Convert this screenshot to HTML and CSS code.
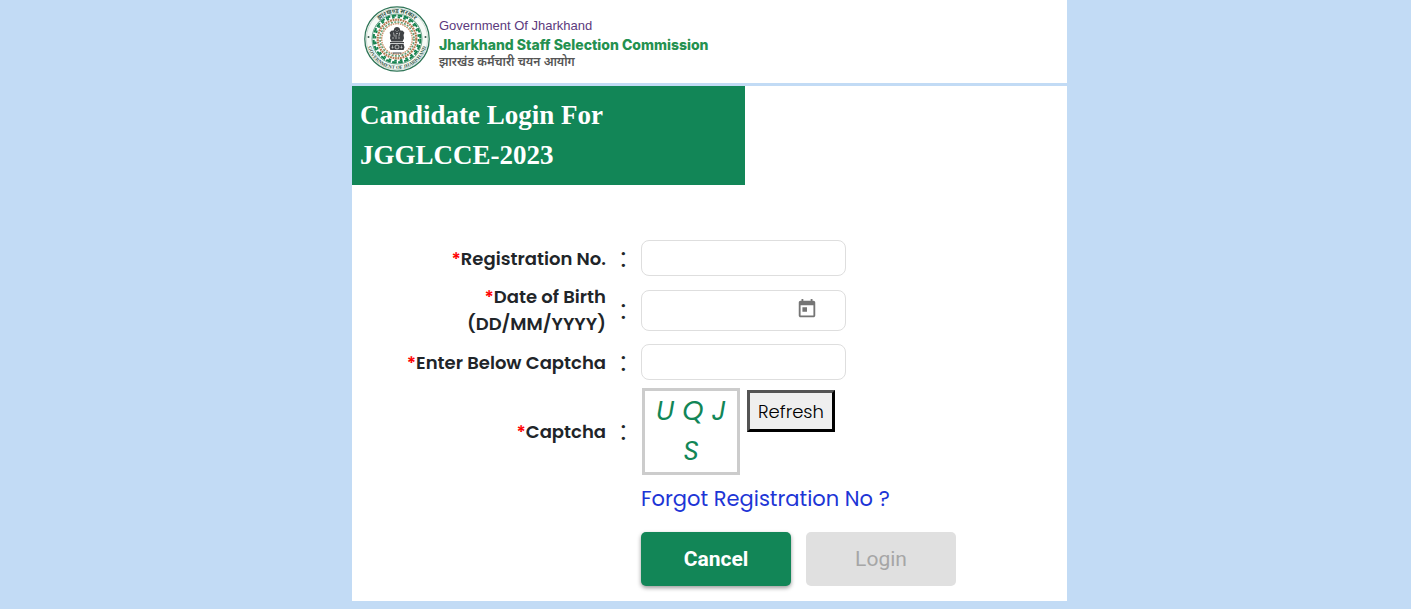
FILE: index.html
```html
<!DOCTYPE html>
<html lang="en">
<head>
  <meta charset="UTF-8">
  <meta name="viewport" content="width=device-width, initial-scale=1">
  <title>Candidate Login</title>
  <link rel="stylesheet" href="styles.css">
</head>
<body>

  <div class="page">

    <!-- Header -->
    <header class="header">
      <svg class="seal" viewBox="0 0 66 66" aria-hidden="true">
        <defs>
          <path id="arc-top" d="M7 33a26 26 0 0 1 52 0"/>
          <path id="arc-bottom" d="M3 33a30 30 0 0 0 60 0"/>
        </defs>
        <circle cx="33" cy="33" r="32.200" fill="#fff" stroke="#2f7557" stroke-width="1.300"/>
        <circle cx="33" cy="33" r="30.700" fill="#f6faf6" stroke="#9db9a9" stroke-width=".5"/>
        <text class="seal-text seal-hindi"><textPath href="#arc-top" startOffset="50%" text-anchor="middle">झारखण्ड सरकार</textPath></text>
        <text class="seal-text"><textPath href="#arc-bottom" startOffset="50%" text-anchor="middle">GOVERNMENT OF JHARKHAND</textPath></text>
        <circle cx="4.500" cy="31" r="1" fill="#35584a"/>
        <circle cx="61.500" cy="31" r="1" fill="#35584a"/>
        <circle cx="33" cy="33" r="25" fill="#fff" stroke="#2f7f5b" stroke-width=".7"/>
        <!-- Rings of leaves, dancers and flowers -->
        <circle cx="33" cy="33" r="23.400" fill="none" stroke="#16834f" stroke-width="2" stroke-dasharray="4.700 1.426"/>
        <circle cx="33" cy="33" r="21.600" fill="none" stroke="#16834f" stroke-width="1.700" stroke-dasharray="2.600 3.055"/>
        <circle cx="33" cy="33" r="19.300" fill="none" stroke="#b57a52" stroke-width="2.200" stroke-dasharray="1.800 .726"/>
        <circle cx="33" cy="33" r="17" fill="none" stroke="#5f9a70" stroke-width="1.600" stroke-dasharray="2 1.338"/>
        <circle cx="33" cy="33" r="15.300" fill="#fff" stroke="#c48c62" stroke-width="1.300" stroke-dasharray="1.600 .803"/>
        <!-- Lion capital -->
        <g fill="#3f4245">
          <path d="M30.500 22q2.500-2.200 5 0l.9 2.600 2.400.2 1.600 2-.9 2.200.5 3.200-1.400 3.200H27.400L26 32.200l.5-3.200-.9-2.200 1.600-2 2.400-.2z"/>
          <path d="M26 36h14v1.300H26zM26.500 38h13l1 3.300-.9 2.600H26.400l-.9-2.600z"/>
          <path d="M28.500 46.500h9v1h-9z"/>
        </g>
        <path d="M31.500 24.500l1 1m2-1-1 1m-1.500 2h2m-4.500-1 .8 4m5.400-4-.8 4m-2.900-2v4.500m-3-2v2m6-2v2" fill="none" stroke="#d3d4d3" stroke-width=".7"/>
        <circle cx="33" cy="41" r="2" fill="none" stroke="#dedfdd" stroke-width=".7"/>
        <path d="M27.500 41.500h2m7 0h2m-10-2v3m9-3v3" stroke="#c9cbc9" stroke-width=".7"/>
      </svg>
      <div class="brand">
        <div class="brand-gov">Government Of Jharkhand</div>
        <div class="brand-name">Jharkhand Staff Selection Commission</div>
        <div class="brand-hindi" lang="hi">झारखंड कर्मचारी चयन आयोग</div>
      </div>
    </header>

    <main class="content">
      <h1 class="title">Candidate Login For JGGLCCE-2023</h1>

      <!-- Login form -->
      <form class="login-form">
        <div class="form-row">
          <label class="label" for="reg-no"><span class="required">*</span>Registration No.</label>
          <span class="colon">:</span>
          <input class="field" type="text" id="reg-no">
        </div>

        <div class="form-row">
          <label class="label" for="dob"><span class="required">*</span>Date of Birth<br>(DD/MM/YYYY)</label>
          <span class="colon">:</span>
          <div class="date-field">
            <input class="date-input" type="text" id="dob">
            <button class="calendar" type="button" aria-label="Open calendar">
              <svg viewBox="0 0 24 24" width="22" height="22" fill="currentColor"><path d="M19 3h-1V1h-2v2H8V1H6v2H5c-1.110 0-1.990.9-1.990 2L3 19c0 1.100.89 2 2 2h14c1.100 0 2-.9 2-2V5c0-1.100-.9-2-2-2zm0 16H5V8h14v11zM7 10h5v5H7z"/></svg>
            </button>
          </div>
        </div>

        <div class="form-row">
          <label class="label" for="captcha"><span class="required">*</span>Enter Below Captcha</label>
          <span class="colon">:</span>
          <input class="field" type="text" id="captcha">
        </div>

        <div class="form-row">
          <span class="label"><span class="required">*</span>Captcha</span>
          <span class="colon">:</span>
          <div class="captcha-group">
            <div class="captcha-code">U Q J S</div>
            <button class="refresh" type="button">Refresh</button>
          </div>
        </div>

        <div class="actions">
          <a class="forgot" href="#">Forgot Registration No ?</a>
          <div class="buttons">
            <button class="btn btn-cancel" type="button">Cancel</button>
            <button class="btn btn-login" type="submit" disabled>Login</button>
          </div>
        </div>
      </form>
    </main>

  </div>

</body>
</html>
```
FILE: styles.css
```css
* {
  margin: 0;
  padding: 0;
  box-sizing: border-box;
}

body {
  padding-left: 8px;
  font-family: Poppins, Inter, sans-serif;
  color: #212529;
  background: #c2dbf5;
}

.page {
  width: 100%;
  max-width: 715px;
  margin: 0 auto;
  padding-bottom: 8px;
}

.header {
  display: flex;
  gap: 9px;
  padding: 6px 12px 11px;
  background: #fff;
}

.seal {
  flex: none;
  width: 66px;
  height: 66px;
}

.seal-text {
  font: bold 5px "Liberation Serif", "Noto Sans", serif;
  fill: #35584a;
}

.seal-hindi {
  font-size: 6px;
}

.brand {
  padding-top: 10px;
  font-family: "Liberation Sans", "Noto Sans", sans-serif;
}

.brand-gov {
  font-size: 13px;
  line-height: 20px;
  color: #5c3a7d;
}

.brand-name {
  font-family: Inter, sans-serif;
  font-size: 14px;
  font-weight: 800;
  line-height: 18px;
  color: #249150;
}

.brand-hindi {
  font-size: 12px;
  font-weight: 600;
  line-height: 16px;
  color: #555;
}

.content {
  margin-top: 3px;
  padding-bottom: 15px;
  background: #fff;
}

.title {
  width: 55%;
  padding: 9px 80px 10px 8px;
  font-family: "Liberation Serif", serif;
  font-size: 27px;
  line-height: 40px;
  color: #fff;
  background: #128657;
}

.login-form {
  padding-top: 55px;
}

.form-row {
  display: grid;
  grid-template-columns: 254px 35px 1fr;
  align-items: center;
  margin-bottom: 7px;
}

.label {
  font-size: 18px;
  font-weight: 600;
  line-height: 27px;
  text-align: right;
}

.required {
  color: #f00;
}

.colon {
  font-size: 27px;
  line-height: 36px;
  text-align: center;
}

.field,
.date-field {
  width: 205px;
  height: 36px;
  border: 1px solid #dedede;
  border-radius: 8px;
  background: #fff;
}

.field {
  padding: 0 10px;
  font: inherit;
}

.date-field {
  display: flex;
  align-items: center;
  height: 41px;
  padding-right: 26px;
}

.date-input {
  flex: 1;
  min-width: 0;
  padding-left: 10px;
  border: none;
  outline: none;
  font: inherit;
  background: transparent;
}

.calendar {
  width: 24px;
  height: 24px;
  border: none;
  color: #757575;
  background: transparent;
  cursor: pointer;
}

.captcha-group {
  display: flex;
  align-items: flex-start;
  gap: 7px;
  padding: 1px 0 0 1px;
}

.captcha-code {
  width: 98px;
  padding: 0 4px 1px;
  border: 3px solid #ccc;
  font-size: 27px;
  font-style: italic;
  font-weight: 400;
  line-height: 40px;
  text-align: center;
  color: #128657;
}

.refresh {
  width: 88px;
  height: 42px;
  margin-top: 2px;
  border: 3px outset #000;
  font: 300 18px Poppins, Inter, sans-serif;
  color: #000;
  background: #efefef;
}

.actions {
  padding-left: 289px;
}

.forgot {
  display: inline-block;
  font-size: 21px;
  line-height: 34px;
  vertical-align: top;
  color: #1d35d6;
  text-decoration: none;
}

.buttons {
  display: flex;
  gap: 15px;
  margin-top: 16px;
}

.btn {
  width: 150px;
  height: 54px;
  border: none;
  border-radius: 5px;
  font: 500 21px Roboto, sans-serif;
}

.btn-cancel {
  font-weight: 700;
  color: #fff;
  background: #128657;
  box-shadow: 0 2px 4px rgba(0, 0, 0, 0.4);
  cursor: pointer;
}

.btn-login {
  font-weight: 400;
  color: #a6a6a6;
  background: #e0e0e0;
}
```
